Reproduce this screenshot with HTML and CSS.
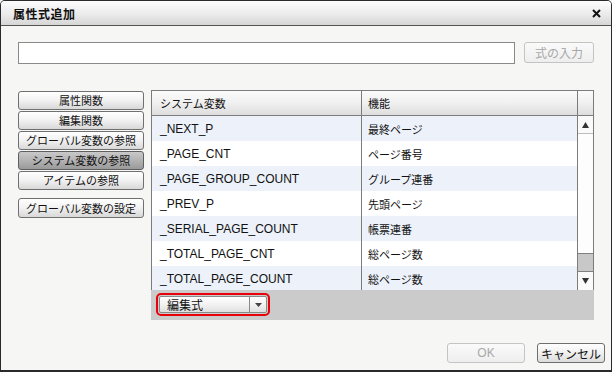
FILE: index.html
```html
<!DOCTYPE html>
<html lang="ja">
<head>
  <meta charset="UTF-8">
  <title>属性式追加</title>
  <link rel="stylesheet" href="styles.css">
</head>
<body>
  <div class="dialog">
    <div class="titlebar">
      <span class="title">属性式追加</span>
      <svg class="close" width="9" height="9" viewBox="0 0 9 9">
        <path d="M1 1 L8 8 M8 1 L1 8" stroke="#111" stroke-width="2"/>
      </svg>
    </div>
    <div class="body">
      <div class="expr-row">
        <input class="expr-input" type="text">
        <button class="btn btn-disabled btn-expr">式の入力</button>
      </div>

      <div class="main">
        <div class="side">
          <button class="side-btn">属性関数</button>
          <button class="side-btn">編集関数</button>
          <button class="side-btn">グローバル変数の参照</button>
          <button class="side-btn active">システム変数の参照</button>
          <button class="side-btn">アイテムの参照</button>
          <button class="side-btn side-gap">グローバル変数の設定</button>
        </div>

        <div class="panel">
          <div class="grid">
            <div class="grid-head">
              <div class="col-name">システム変数</div>
              <div class="col-func">機能</div>
              <div class="col-bar"></div>
            </div>
            <div class="grid-body">
              <div class="rows">
                <div class="row alt"><div class="col-name">_NEXT_P</div><div class="col-func">最終ページ</div></div>
                <div class="row"><div class="col-name">_PAGE_CNT</div><div class="col-func">ページ番号</div></div>
                <div class="row alt"><div class="col-name">_PAGE_GROUP_COUNT</div><div class="col-func">グループ連番</div></div>
                <div class="row"><div class="col-name">_PREV_P</div><div class="col-func">先頭ページ</div></div>
                <div class="row alt"><div class="col-name">_SERIAL_PAGE_COUNT</div><div class="col-func">帳票連番</div></div>
                <div class="row"><div class="col-name">_TOTAL_PAGE_CNT</div><div class="col-func">総ページ数</div></div>
                <div class="row alt"><div class="col-name">_TOTAL_PAGE_COUNT</div><div class="col-func">総ページ数</div></div>
              </div>
              <div class="scrollbar">
                <div class="sb-btn">
                  <svg width="7" height="6" viewBox="0 0 7 6"><path d="M3.5 0 L7 6 L0 6 Z" fill="#333"/></svg>
                </div>
                <div class="sb-track"></div>
                <div class="sb-thumb"></div>
                <div class="sb-btn">
                  <svg width="7" height="6" viewBox="0 0 7 6"><path d="M0 0 L7 0 L3.5 6 Z" fill="#333"/></svg>
                </div>
              </div>
            </div>
          </div>
          <div class="panel-foot">
            <div class="mode-ring">
              <div class="mode-select">
                <span class="mode-text">編集式</span>
                <span class="mode-arrow">
                  <svg width="7" height="4" viewBox="0 0 7 4"><path d="M0 0 L7 0 L3.5 4 Z" fill="#444"/></svg>
                </span>
              </div>
            </div>
          </div>
        </div>
      </div>

      <div class="actions">
        <button class="btn btn-disabled btn-ok">OK</button>
        <button class="btn btn-cancel">キャンセル</button>
      </div>
    </div>
  </div>
</body>
</html>
```

FILE: styles.css
```css
body {
  margin: 0;
  font-family: "Noto Sans CJK JP", "Liberation Sans", sans-serif;
  font-size: 12px;
  color: #111;
  background: #f6f7f5;
}
.dialog {
  width: 612px;
  height: 372px;
  box-sizing: border-box;
  border: 1px solid #2a2a2a;
  border-bottom-width: 2px;
  border-radius: 5px 5px 0 0;
  background: #f6f7f5;
  overflow: hidden;
}
.titlebar {
  height: 24px;
  border-bottom: 1px solid #555;
  background: linear-gradient(#fdfdfd, #e9e9e9 60%, #d6d6d6);
  display: flex;
  align-items: center;
  justify-content: space-between;
  padding: 0 10px 0 12px;
}
.title {
  font-size: 12px;
  font-weight: bold;
  letter-spacing: 0.5px;
}
.close {
  margin-top: 1px;
}
.body {
  padding: 16px 6px 0 17px;
}
.expr-row {
  display: flex;
  gap: 9px;
  margin-right: 11px;
}
.expr-input {
  flex: 1;
  height: 22px;
  box-sizing: border-box;
  margin: 0;
  border: 1px solid #8a8a8a;
  background: #fff;
  padding: 0 4px;
}
.btn {
  font-family: "Noto Sans CJK JP", "Liberation Sans", sans-serif;
  font-size: 12px;
  height: 21px;
  box-sizing: border-box;
  padding: 0;
  border: 1px solid #6e6e6e;
  border-radius: 3px;
  background: linear-gradient(#ffffff, #f0f0f0 50%, #dcdcdc);
  color: #111;
  line-height: 19px;
}
.btn-disabled {
  border-color: #c4c4c4;
  color: #a8a8a8;
  background: linear-gradient(#fafafa, #eeeeee);
}
.btn-expr {
  width: 70px;
}
.main {
  display: flex;
  gap: 7px;
  margin-top: 26px;
  margin-right: 11px;
}
.side {
  width: 126px;
  display: flex;
  flex-direction: column;
  gap: 1px;
  padding-top: 1px;
}
.side-btn {
  height: 19px;
  box-sizing: border-box;
  padding: 0;
  font-family: "Noto Sans CJK JP", sans-serif;
  font-size: 11px;
  line-height: 17px;
  color: #111;
  border: 1px solid #707070;
  border-radius: 3px;
  background: linear-gradient(#ffffff, #f1f1f1 50%, #d8d8d8);
}
.side-btn.active {
  background: linear-gradient(#c9c9c9, #b2b2b2 50%, #9a9a9a);
  border-color: #5f5f5f;
}
.side-gap {
  margin-top: 7px;
  height: 20px;
}
.panel {
  flex: 1;
  display: flex;
  flex-direction: column;
}
.grid {
  border: 1px solid #7c7c7c;
  border-bottom: none;
  background: #fff;
}
.grid-head {
  display: flex;
  height: 24px;
  border-bottom: 1px solid #7c7c7c;
  background: linear-gradient(#fbfbfb, #f0f0f0 50%, #dedede);
}
.grid-head > div {
  display: flex;
  align-items: center;
}
.col-name {
  width: 210px;
  border-right: 1px solid #7c7c7c;
  padding-left: 8px;
  box-sizing: border-box;
  font-family: "Liberation Sans", "Noto Sans CJK JP", sans-serif;
  font-size: 12px;
}
.grid-head .col-name,
.col-func {
  font-family: "Noto Sans CJK JP", sans-serif;
  font-size: 11px;
}
.col-func {
  flex: 1;
  padding-left: 6px;
}
.col-bar {
  width: 15px;
  border-left: 1px solid #7c7c7c;
}
.grid-body {
  display: flex;
  height: 174px;
}
.rows {
  flex: 1;
}
.row {
  display: flex;
  height: 25px;
  align-items: center;
  background: #fff;
}
.row.alt {
  background: #ecf1fa;
}
.row .col-name {
  height: 25px;
  display: flex;
  align-items: center;
}
.scrollbar {
  width: 15px;
  border-left: 1px solid #7c7c7c;
  display: flex;
  flex-direction: column;
  background: #fdfdfd;
}
.sb-btn {
  height: 18px;
  box-sizing: border-box;
  display: flex;
  align-items: center;
  justify-content: center;
  background: #fafafa;
}
.sb-btn:first-child {
  border-bottom: 1px solid #bdbdbd;
}
.sb-track {
  flex: 1;
}
.sb-thumb {
  height: 19px;
  box-sizing: border-box;
  border-top: 1px solid #808080;
  border-bottom: 1px solid #808080;
  background: #c8c8c8;
}
.panel-foot {
  height: 30px;
  background: #cbcbcb;
  padding: 3px 0 0 5px;
  box-sizing: border-box;
}
.mode-ring {
  width: 114px;
  height: 23px;
  box-sizing: border-box;
  border: 2px solid #e8000b;
  border-radius: 5px;
  padding: 1px;
}
.mode-select {
  height: 100%;
  display: flex;
  border: 1px solid #8a8a8a;
  border-radius: 2px;
  box-sizing: border-box;
  background: linear-gradient(#ffffff, #f2f2f2 50%, #e0e0e0);
}
.mode-text {
  flex: 1;
  padding-left: 7px;
  line-height: 16px;
  font-size: 12px;
}
.mode-arrow {
  width: 16px;
  border-left: 1px solid #8a8a8a;
  display: flex;
  align-items: center;
  justify-content: center;
}
.actions {
  display: flex;
  justify-content: flex-end;
  gap: 12px;
  margin-top: 23px;
}
.btn-ok {
  width: 78px;
  height: 20px;
  font-family: "Liberation Sans", sans-serif;
}
.btn-cancel {
  width: 68px;
  height: 20px;
}
```
